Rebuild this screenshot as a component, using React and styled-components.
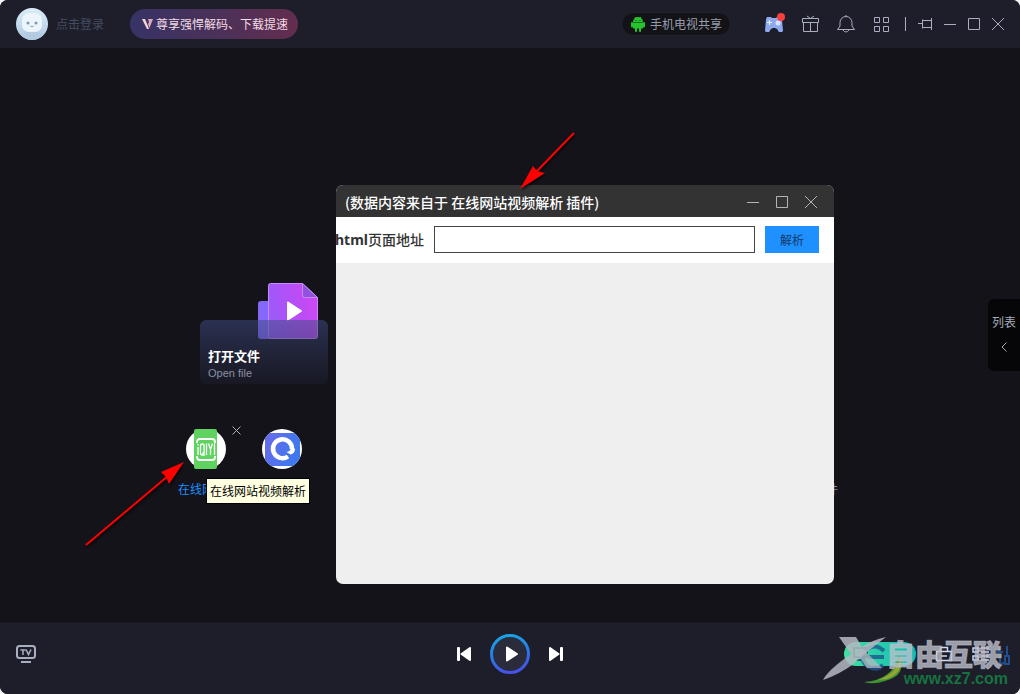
import React from 'react'
import styled, { createGlobalStyle } from 'styled-components'

const colors = {
  bar: '#1e1e2b',
  stage: '#131319',
  icon: '#a9aec0',
  muted: '#444c61',
  blue: '#1e90ff',
  arrow: '#ff0000'
}

const GlobalStyle = createGlobalStyle`
  * {
    box-sizing: border-box;
  }
  body {
    margin: 0;
    background: #f4f4f4;
    font-family: "Noto Sans CJK SC", sans-serif;
    font-size: 12px;
    line-height: 16px;
  }
  button {
    padding: 0;
    border: 0;
    background: none;
    color: inherit;
    font: inherit;
    cursor: pointer;
  }
  svg {
    display: block;
    flex: none;
  }
`

const Player = styled.div`
  position: relative;
  display: flex;
  flex-direction: column;
  min-height: 100vh;
  border-radius: 8px;
  overflow: hidden;
  background: ${colors.stage};
`

const TopBar = styled.header`
  display: flex;
  align-items: center;
  height: 48px;
  padding: 0 16px;
  background: ${colors.bar};
`

const LoginButton = styled.button`
  display: flex;
  align-items: center;
  gap: 8px;
  margin-right: 26px;
  color: ${colors.muted};
`

const VipButton = styled.button`
  display: flex;
  align-items: center;
  gap: 2px;
  height: 30px;
  padding: 0 10px 0 12px;
  border-radius: 16px;
  background: linear-gradient(90deg, #373366, #4a3159 50%, #632d4f);
  color: #f3dbe2;
`

const ShareButton = styled.button`
  display: flex;
  align-items: center;
  gap: 4px;
  height: 24px;
  margin-left: auto;
  padding: 0 8px;
  border: 1px solid #242430;
  border-radius: 12px;
  background: #121217;
  color: #989dab;
`

const Tools = styled.div`
  display: flex;
  align-items: center;
  gap: 18px;
  margin-left: 34px;
  color: ${colors.icon};
`

const WindowButtons = styled.div`
  display: flex;
  align-items: center;
  gap: ${({ $gap }) => $gap}px;
  color: ${({ $color }) => $color || colors.icon};
`

const Divider = styled.i`
  width: 1px;
  height: 14px;
  margin: 0 12px 0 14px;
  background: ${colors.icon};
`

const Stage = styled.main`
  position: relative;
  flex: 1;
  padding-top: 234px;
`

const Home = styled.section`
  width: 664px;
  max-width: 100%;
  margin: 0 auto;
`

const OpenFile = styled.button`
  position: relative;
  display: block;
  width: 128px;
  margin-left: 22px;
  padding-top: 38px;
  text-align: left;

  > svg {
    position: absolute;
    top: 0;
    right: 10px;
  }
`

const OpenFilePanel = styled.span`
  position: relative;
  display: flex;
  flex-direction: column;
  justify-content: flex-end;
  height: 64px;
  padding: 0 8px 3px;
  border-radius: 6px;
  background: linear-gradient(rgba(63, 75, 130, 0.52), rgba(30, 30, 46, 0.5));
  color: #8a90a3;
  font: 11px/16px "Liberation Sans", Arial, sans-serif;

  b {
    color: #fff;
    font: bold 13px/18px "Noto Sans CJK SC", sans-serif;
  }
`

const Plugins = styled.nav`
  display: flex;
  align-items: flex-start;
  gap: 20px;
  margin-top: 45px;
`

const PluginSlot = styled.div`
  position: relative;
  flex: none;
  width: 56px;

  &:last-child {
    margin-left: auto;
  }
`

const Plugin = styled.button`
  display: block;
  width: 100%;
  color: ${({ $active }) => ($active ? colors.blue : '#8a90a3')};

  > svg {
    margin: 0 auto 12px;
  }
`

const PluginName = styled.span`
  display: block;
  overflow: hidden;
  text-overflow: ellipsis;
  white-space: nowrap;
`

const RemoveButton = styled.button`
  position: absolute;
  top: -3px;
  right: -7px;
  color: ${colors.icon};
`

const Tooltip = styled.div`
  position: absolute;
  top: 49px;
  left: 28px;
  z-index: 1;
  padding: 4px 3px;
  border: 1px solid #000;
  background: #ffffe1;
  color: #000;
  white-space: nowrap;
`

const Dialog = styled.section`
  position: absolute;
  top: 137px;
  left: 336px;
  z-index: 2;
  display: flex;
  flex-direction: column;
  width: 498px;
  height: 399px;
  border-radius: 7px;
  overflow: hidden;
  background: #efefef;
`

const DialogTitle = styled.header`
  display: flex;
  align-items: center;
  justify-content: space-between;
  height: 32px;
  padding: 1px 17px 0 9px;
  background: #333;
  color: #fff;

  h2 {
    margin: 0;
    font-size: 14px;
    font-weight: 500;
  }
`

const ParseForm = styled.form`
  display: flex;
  align-items: flex-start;
  gap: 10px;
  height: 46px;
  padding: 9px 15px 0 0;
  background: #fff;
`

const UrlLabel = styled.label`
  display: flex;
  justify-content: flex-end;
  width: 88px;
  color: #333;
  font: 500 14px/27px "Noto Sans CJK SC", sans-serif;
  white-space: nowrap;

  b {
    font-family: "Noto Sans", sans-serif;
  }
`

const UrlInput = styled.input`
  flex: 1;
  min-width: 0;
  height: 27px;
  padding: 0 6px;
  border: 1px solid #444;
  background: #fff;
  outline: none;
`

const ParseButton = styled.button`
  width: 54px;
  height: 27px;
  background: ${colors.blue};
  color: #163a63;
`

const ListTab = styled.button`
  position: absolute;
  top: 251px;
  right: 0;
  display: flex;
  flex-direction: column;
  align-items: center;
  justify-content: center;
  gap: 12px;
  width: 32px;
  height: 72px;
  padding-bottom: 4px;
  border-radius: 6px 0 0 6px;
  background: #060608;
  color: #a6abb9;
`

const Arrows = styled.svg`
  position: absolute;
  top: 0;
  left: 0;
  z-index: 3;
  pointer-events: none;
  filter: drop-shadow(1px 2px 1px rgba(0, 0, 0, 0.6));
`

const BottomBar = styled.footer`
  position: relative;
  display: grid;
  grid-template-columns: 1fr auto 1fr;
  align-items: center;
  height: 72px;
  padding: 0 16px 9px;
  border-top: 1px solid #191922;
  background: ${colors.bar};
  color: ${colors.icon};
`

const TvButton = styled.button`
  justify-self: start;
`

const Transport = styled.div`
  display: flex;
  align-items: center;
  gap: 19px;
  color: #fff;
`

const Extras = styled.div`
  display: flex;
  align-items: center;
  justify-content: flex-end;
  gap: 19px;
  padding-right: 14px;
  color: #d5d9ee;
`

const CastButton = styled.button`
  display: flex;
  align-items: center;
  width: 72px;
  height: 24px;
  padding-left: 9px;
  border-radius: 12px;
  background: linear-gradient(90deg, #3fe0a0, #13b9b4);
  color: #16685f;
`

const Watermark = styled.div`
  position: absolute;
  right: 0;
  bottom: 0;
  width: 200px;
  height: 64px;
  padding: 7px 12px 0 0;
  text-align: right;
  pointer-events: none;

  svg {
    position: absolute;
    top: 0;
    left: 0;
  }
  strong {
    position: relative;
    display: block;
    margin-right: 6px;
    color: rgba(190, 193, 205, 0.8);
    font-size: 29px;
    font-weight: 900;
    line-height: 32px;
    -webkit-text-stroke: 1px rgba(190, 193, 205, 0.6);
  }
  span {
    position: relative;
    display: block;
    color: #16733f;
    font: bold 16px/19px "Liberation Sans", Arial, sans-serif;
  }
`

function Line ({ size = 18, width, height, viewBox, children, ...rest }) {
  const w = width || size
  const h = height || size
  return (
    <svg
      width={w}
      height={h}
      viewBox={viewBox || `0 0 ${w} ${h}`}
      fill='none'
      stroke='currentColor'
      aria-hidden='true'
      {...rest}
    >
      {children}
    </svg>
  )
}

function Avatar () {
  return (
    <svg width='32' height='32' viewBox='0 0 32 32' aria-hidden='true'>
      <defs>
        <clipPath id='face'>
          <circle cx='16' cy='16' r='16' />
        </clipPath>
        <linearGradient id='sky' x2='0' y2='1'>
          <stop stopColor='#dcecf9' />
          <stop offset='1' stopColor='#adc9e2' />
        </linearGradient>
      </defs>
      <g clipPath='url(#face)'>
        <path fill='url(#sky)' d='M0 0h32v32H0z' />
        <path fill='#b4cbe2' d='M5 32c0-6 4-9 11-9s11 3 11 9z' />
        <rect x='6' y='5' width='20' height='19' rx='7' fill='#edf5fc' />
        <circle cx='12' cy='15' r='1.5' fill='#8596ab' />
        <circle cx='20' cy='15' r='1.5' fill='#8596ab' />
        <path d='M14 18q2 1.5 4 0' fill='none' stroke='#9aaabd' />
      </g>
    </svg>
  )
}

function Android () {
  return (
    <svg width='16' height='16' viewBox='0 0 16 16' fill='#25c42d' aria-hidden='true'>
      <path d='M3 6a5 5 0 0 1 10 0zM3 6.500h10v6H3z' />
      <path d='M5 1l1.500 2M11 1L9.500 3' stroke='#25c42d' />
      <rect x='1' y='6' width='2' height='5.500' rx='1' />
      <rect x='13' y='6' width='2' height='5.500' rx='1' />
      <rect x='5' y='11' width='2' height='5' rx='1' />
      <rect x='9' y='11' width='2' height='5' rx='1' />
      <circle cx='6' cy='4.500' r='.5' fill='#121217' />
      <circle cx='10' cy='4.500' r='.5' fill='#121217' />
    </svg>
  )
}

function Gamepad () {
  return (
    <svg width='18' height='18' viewBox='0 0 18 18' overflow='visible' aria-hidden='true'>
      <path d='M2 2h4l1 1h4l1-1h4l1 3 1 11-1 1h-3l-2-3-2-1H8l-2 1-2 3H1l-1-1L1 4z' fill='#8fa9ee' />
      <path d='M4.500 5v5M2 7.500h5' stroke='#e9f0ff' />
      <circle cx='13' cy='8' r='2.500' fill='#d6e4ff' />
      <circle cx='16' cy='2' r='4' fill='#fb3f3b' />
    </svg>
  )
}

function MinMaxClose ({ size = 12 }) {
  const m = size / 2
  return (
    <>
      <button aria-label='最小化'>
        <Line size={size}><path d={`M0 ${m + 0.5}h${size}`} /></Line>
      </button>
      <button aria-label='最大化'>
        <Line size={size}><path d={`M.5 .5h${size - 1}v${size - 1}H.5z`} /></Line>
      </button>
      <button aria-label='关闭'>
        <Line size={size}><path d={`M0 0l${size} ${size}M${size} 0L0 ${size}`} /></Line>
      </button>
    </>
  )
}

function FileArt () {
  return (
    <svg width='60' height='58' viewBox='0 0 60 58' aria-hidden='true'>
      <defs>
        <linearGradient id='sheet' x1='0' y1='.6' x2='1' y2='.3'>
          <stop stopColor='#9a5cfa' />
          <stop offset='.6' stopColor='#b94df5' />
          <stop offset='1' stopColor='#cf48f4' />
        </linearGradient>
      </defs>
      <rect y='19' width='30' height='38' rx='3' fill='#8468fa' />
      <path d='M12.500 1.500h32l15 14v39a2 2 0 0 1-2 2h-45a2 2 0 0 1-2-2v-51a2 2 0 0 1 2-2z' fill='url(#sheet)' stroke='#c58bfb' />
      <path d='M44.500 1.500v12a2 2 0 0 0 2 2h13z' fill='#9152df' stroke='#c58bfb' />
      <path d='M29 20.500v17a1 1 0 0 0 1.500.8l13-8.500a1 1 0 0 0 0-1.600l-13-8.500a1 1 0 0 0-1.500.8z' fill='#fff' />
    </svg>
  )
}

function VideoSiteIcon () {
  return (
    <svg width='40' height='40' viewBox='0 0 40 40' aria-hidden='true'>
      <circle cx='20' cy='20' r='20' fill='#fff' />
      <rect x='8' width='23' height='40' rx='2' fill='#5fd35f' />
      <g fill='none' stroke='#fff' strokeWidth='1.300'>
        <path d='M11 14v-1q0-3 3-3h12q3 0 3 3v1M11 27v1q0 3 3 3h12q3 0 3-3v-1' strokeWidth='1.800' />
        <path d='M12 18v8M12 15v1.500M14.500 17q0-2 1.800-2t1.800 2v7q0 2-1.800 2t-1.800-2zM16.500 23.500l2 3.500M20.500 14.500V26M22.500 14.500l2 6 2-6M24.500 20v6M28.500 14.500V26' />
      </g>
    </svg>
  )
}

function BrowserIcon () {
  return (
    <svg width='40' height='40' viewBox='0 0 40 40' aria-hidden='true'>
      <defs>
        <linearGradient id='browser' x1='0' x2='1' y2='.4'>
          <stop stopColor='#6b6bea' />
          <stop offset='1' stopColor='#3d78ee' />
        </linearGradient>
        <clipPath id='disc'>
          <circle cx='20' cy='20' r='20' />
        </clipPath>
      </defs>
      <g clipPath='url(#disc)'>
        <path fill='#fff' d='M0 0h40v40H0z' />
        <rect x='3' y='4' width='35' height='33' rx='3' fill='url(#browser)' />
        <path d='M26 27.500A9.500 9.500 0 1 1 30 20' fill='none' stroke='#fff' strokeWidth='4.500' />
        <path d='M24.500 23q4-1 4-3.500h4.500q0 5-4.500 6z' fill='#fff' />
      </g>
    </svg>
  )
}

function PlayIcon () {
  return (
    <svg width='40' height='40' viewBox='0 0 40 40' aria-hidden='true'>
      <defs>
        <linearGradient id='ring' x1='.4' x2='.6' y2='1'>
          <stop stopColor='#17a5e4' />
          <stop offset='.5' stopColor='#2878ea' />
          <stop offset='1' stopColor='#4850ea' />
        </linearGradient>
      </defs>
      <circle cx='20' cy='20' r='18.500' fill='#2a2b3b' stroke='url(#ring)' strokeWidth='3' />
      <path d='M17 13.500v13l10-6.500z' fill='#fff' stroke='#fff' strokeWidth='2' strokeLinejoin='round' />
    </svg>
  )
}

function SkipIcon ({ next }) {
  return (
    <svg width='14' height='14' viewBox='0 0 14 14' fill='#fff' aria-hidden='true'>
      <g transform={next ? 'rotate(180 7 7)' : undefined}>
        <rect width='3' height='14' rx='1' />
        <path d='M13 1v12L4.500 7z' stroke='#fff' strokeWidth='2' strokeLinejoin='round' />
      </g>
    </svg>
  )
}

function WatermarkArt () {
  return (
    <svg width='200' height='56' viewBox='0 0 200 56' aria-hidden='true'>
      <path d='M64 21q-9-9-19 0-6 10 4 16 8 4 14-2M48 27h16' fill='none' stroke='#1d5590' strokeWidth='4' opacity='.8' />
      <path d='M44 52q29-2 35-27 9 20-14 26-12 4-21 1z' fill='#3f9331' />
      <path d='M58 50q20-7 22-24 5 16-13 23z' fill='#b9ac35' opacity='.7' />
      <path d='M19 7h17l6 10q10-7 24-10-16 12-34 28-12 9-29 15 5-10 28-26z' fill='#b5b8c1' opacity='.85' />
      <path d='M38 25l6-5 18 18H47z' fill='#b5b8c1' opacity='.75' />
      <path d='M179 17v4M176 22h7M180 26v8M184 33l-8 2M187 16v9h1M185 26h4v8h-4z' fill='none' stroke='#1f4f8d' strokeWidth='2' />
    </svg>
  )
}

export default function App () {
  return (
    <>
      <GlobalStyle />
      <Player>
        <TopBar>
          <LoginButton>
            <Avatar />
            点击登录
          </LoginButton>
          <VipButton>
            <svg width='12' height='12' viewBox='0 0 12 12' aria-hidden='true'>
              <path d='M0 1h3l3 7 1 3H5z' fill='#f6d5d4' />
              <path d='M6 1h5L7.500 10 6 6l1-2z' fill='#dca9c3' />
            </svg>
            尊享强悍解码、下载提速
          </VipButton>
          <ShareButton>
            <Android />
            手机电视共享
          </ShareButton>
          <Tools>
            <button aria-label='游戏'><Gamepad /></button>
            <button aria-label='礼物'>
              <Line><path d='M1.500 3.500h16v4h-16zM2.500 7.500v9h14v-9M9.500 7.500v9M6 1l3.500 2.500L13 1' /></Line>
            </button>
            <button aria-label='消息'>
              <Line><path d='M.5 14.500h17l-2.500-3.500V7.500a6 6 0 0 0-12 0V11zM6 15q3 4 6 0M9 0v1.500' /></Line>
            </button>
            <button aria-label='应用'>
              <Line><path d='M1.500 2.500h5v5h-5zM10.500 2.500h5v5h-5zM1.500 11.500h5v5h-5zM10.500 11.500h5v5h-5z' /></Line>
            </button>
          </Tools>
          <Divider />
          <WindowButtons $gap={12}>
            <button aria-label='置顶'>
              <Line width={14} height={14}><path d='M0 6.500h4.500M4.500 2.500v9M4.500 3.500h9M4.500 10.500h9M13.500 1v12' /></Line>
            </button>
            <MinMaxClose />
          </WindowButtons>
        </TopBar>

        <Stage>
          <Home>
            <OpenFile>
              <FileArt />
              <OpenFilePanel>
                <b>打开文件</b>
                Open file
              </OpenFilePanel>
            </OpenFile>
            <Plugins>
              <PluginSlot>
                <Plugin $active>
                  <VideoSiteIcon />
                  <PluginName>在线网站视频解析</PluginName>
                </Plugin>
                <RemoveButton aria-label='移除'>
                  <Line size={9}><path d='M.5 .5l8 8M8.500 .5l-8 8' /></Line>
                </RemoveButton>
                <Tooltip role='tooltip'>在线网站视频解析</Tooltip>
              </PluginSlot>
              <PluginSlot>
                <Plugin aria-label='浏览器'>
                  <BrowserIcon />
                </Plugin>
              </PluginSlot>
              <PluginSlot>
                <Plugin>
                  <Line size={40}><path d='M20 12v16M12 20h16' /></Line>
                  <PluginName>更多插件</PluginName>
                </Plugin>
              </PluginSlot>
            </Plugins>
          </Home>

          <ListTab>
            列表
            <Line width={6} height={10}><path d='M5.500 .5L1 5l4.500 4.500' /></Line>
          </ListTab>

          <Dialog>
            <DialogTitle>
              <h2>(数据内容来自于 在线网站视频解析 插件)</h2>
              <WindowButtons $gap={17} $color='#b5b5b5'>
                <MinMaxClose />
              </WindowButtons>
            </DialogTitle>
            <ParseForm onSubmit={e => e.preventDefault()}>
              <UrlLabel htmlFor='page-url'><b>html</b>页面地址</UrlLabel>
              <UrlInput id='page-url' type='text' />
              <ParseButton type='submit'>解析</ParseButton>
            </ParseForm>
          </Dialog>
        </Stage>

        <BottomBar>
          <TvButton aria-label='电视'>
            <Line width={20} height={20} strokeWidth='2'>
              <rect x='1' y='2' width='18' height='12' rx='2.500' />
              <path d='M5 18h10' />
              <path d='M4.500 6h5M7 6v5M10 5.500l2.500 5 2.500-5' strokeWidth='1.500' />
            </Line>
          </TvButton>
          <Transport>
            <button aria-label='上一个'><SkipIcon /></button>
            <button aria-label='播放'><PlayIcon /></button>
            <button aria-label='下一个'><SkipIcon next /></button>
          </Transport>
          <Extras>
            <CastButton aria-label='投屏'>
              <Line width={16} height={14} strokeWidth='2'><path d='M1 1h13v9H1zM3 13h9' /></Line>
            </CastButton>
            <button aria-label='工具箱'>
              <Line><path d='M1.500 6.500h15v9h-15zM5.500 6.500v-4h7v4M6 11h6' strokeWidth='1.500' /></Line>
            </button>
            <button aria-label='播放列表'>
              <Line><path d='M1 3h5v4H1zM9 3h8M9 7h8M1 11h5v4H1zM9 11h8M9 15h8' strokeWidth='1.500' /></Line>
            </button>
          </Extras>
          <Watermark>
            <WatermarkArt />
            <strong>自由互联</strong>
            <span>www.xz7.com</span>
          </Watermark>
        </BottomBar>

        <Arrows width='600' height='560' viewBox='0 0 600 560' fill={colors.arrow} stroke={colors.arrow} aria-hidden='true'>
          <path d='M86 545L168 476M574 133L536 172' strokeWidth='2' />
          <path d='M184 462l-23 10 5 5 3 7zM520 189l13-23 4 5 8 2z' stroke='none' />
        </Arrows>
      </Player>
    </>
  )
}
